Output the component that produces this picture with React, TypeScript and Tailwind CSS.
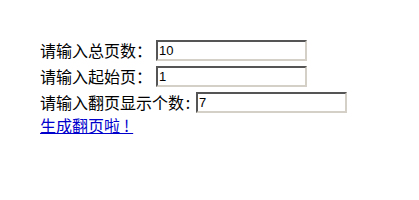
import React from "react";

const inputCls =
  "w-[151px] h-[21px] ml-[4px] border-2 border-t-[#555] border-l-[#555] border-b-[#d4d0c8] border-r-[#d4d0c8] bg-white px-[1px] text-[13px] text-black outline-none [font-family:'Liberation_Sans',Arial,sans-serif]";

export default function App() {
  return (
    <div className="w-[419px] h-[200px] bg-white pt-[37px] pl-[40px] text-black text-[16px] [font-family:'Noto_Sans_CJK_SC',sans-serif]">
      <div className="flex items-center h-[26px]">
        <span>请输入总页数：</span>
        <input className={inputCls} defaultValue="10" />
      </div>
      <div className="flex items-center h-[26px]">
        <span>请输入起始页：</span>
        <input className={inputCls} defaultValue="1" />
      </div>
      <div className="flex items-center h-[26px]">
        <span>
          请输入翻页显示个数<span className="inline-block w-[8px] text-center">:</span>
        </span>
        <input className={inputCls} defaultValue="7" />
      </div>
      <div className="flex items-center h-[20px]">
        <a href="#" className="text-[#0000cc] underline leading-[20px]">
          生成翻页<span className="tracking-[4px]">啦!</span>
        </a>
      </div>
    </div>
  );
}
